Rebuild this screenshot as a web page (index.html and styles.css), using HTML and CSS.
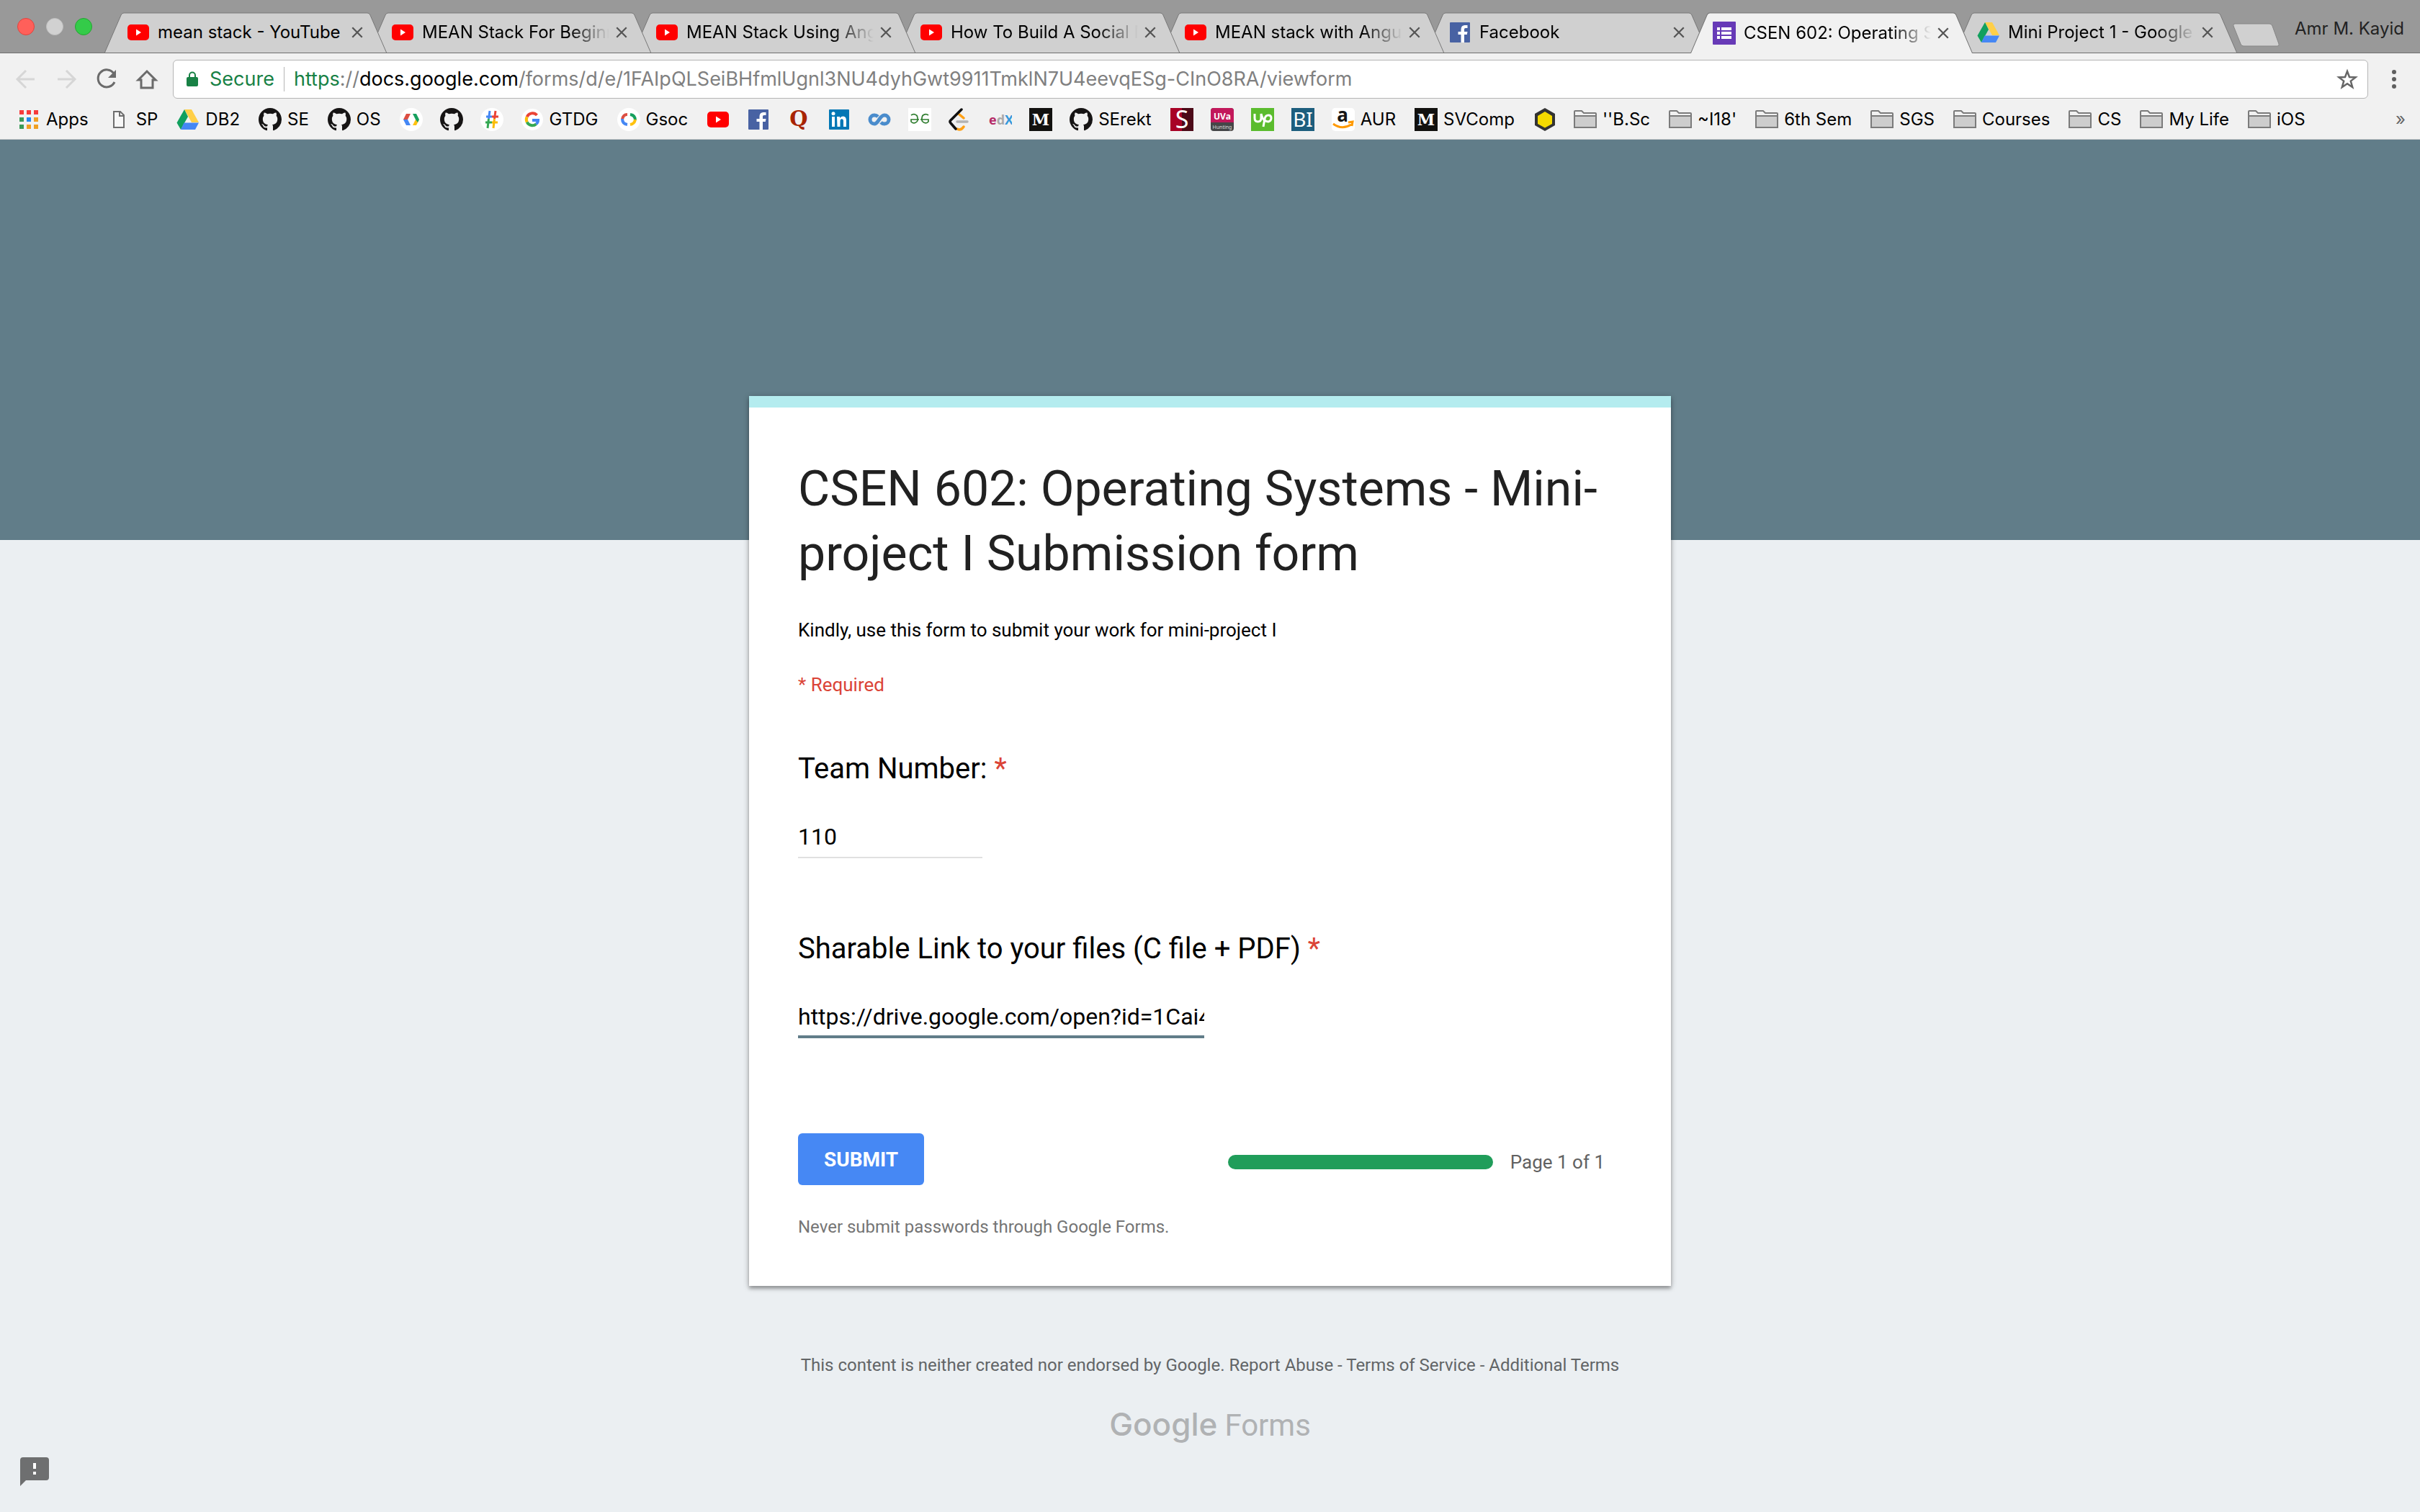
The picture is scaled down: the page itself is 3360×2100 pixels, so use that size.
FILE: index.html
```html
<!DOCTYPE html>
<html lang="en">
<head>
<meta charset="utf-8">
<title>CSEN 602: Operating Systems - Mini-project I Submission form</title>
<link rel="stylesheet" href="styles.css">
</head>
<body>
<svg class="sprite" aria-hidden="true">
  <symbol id="tab-shape" viewBox="0 0 392 56" preserveAspectRatio="none"><path d="M0 57 L23 4 Q24 1 27 1 H365 Q368 1 369 4 L392 57"/></symbol>
  <symbol id="youtube" viewBox="0 0 32 32"><rect x="1" y="5" width="30" height="22" rx="5" fill="#f00"/><path d="M13 11.500v9l7-4.500z" fill="#fff"/></symbol>
  <symbol id="facebook" viewBox="0 0 32 32"><rect x="2" y="2" width="28" height="28" rx="1" fill="#4862a3"/><path d="M17.500 30V19h-4v-4h4v-3c0-4 2-6 6-6h3v4h-2.500c-1.500 0-2 .7-2 2v3h4.500l-.7 4H22v11z" fill="#fff"/></symbol>
  <symbol id="drive" viewBox="0 0 32 32"><path d="M11 2h10l10 18H21z" fill="#ffcf48"/><path d="M11 2L.5 20.500 6 30 16 12z" fill="#11a05e"/><path d="M10.500 20.500H31L26 30H6z" fill="#4587f4"/></symbol>
  <symbol id="forms" viewBox="0 0 32 32"><rect width="32" height="32" rx="1" fill="#673ab7"/><path d="M6 8h4v4H6zM12 8h14v4H12zM6 14h4v4H6zM12 14h14v4H12zM6 20h4v4H6zM12 20h14v4H12z" fill="#fff"/></symbol>
  <symbol id="close" viewBox="0 0 16 16"><path d="M2 2l12 12M14 2L2 14" stroke="#555" stroke-width="2" fill="none"/></symbol>
  <symbol id="github" viewBox="0 0 16 16"><path fill="#161414" d="M8 0C3.580 0 0 3.580 0 8c0 3.540 2.290 6.530 5.470 7.590.4.070.55-.17.55-.38 0-.19-.01-.82-.01-1.490-2.010.37-2.530-.49-2.690-.94-.09-.23-.48-.94-.82-1.130-.28-.15-.68-.52-.01-.53.63-.01 1.080.58 1.230.82.72 1.210 1.870.87 2.330.66.070-.52.28-.87.51-1.070-1.780-.2-3.640-.89-3.640-3.950 0-.87.31-1.590.82-2.150-.08-.2-.36-1.020.08-2.120 0 0 .67-.21 2.200.82.64-.18 1.320-.27 2-.27s1.360.09 2 .27c1.530-1.040 2.200-.82 2.200-.82.44 1.100.16 1.920.08 2.120.51.56.82 1.270.82 2.150 0 3.070-1.870 3.750-3.650 3.950.29.25.54.73.54 1.480 0 1.070-.01 1.930-.01 2.200 0 .21.15.46.55.38A8.010 8.010 0 0 0 16 8c0-4.420-3.580-8-8-8z"/></symbol>
  <symbol id="devs" viewBox="0 0 32 32"><circle cx="16" cy="16" r="16" fill="#fff"/><path d="M9 8h6l-4 8H5z" fill="#dd4f43"/><path d="M5 16h6l4 8H9z" fill="#4587f4"/><path d="M22 16h5l-4 8h-5z" fill="#ffc20e"/><path d="M18 8h5l4 8-2 4-3-4z" fill="#17a05e"/></symbol>
  <symbol id="gsoc" viewBox="0 0 32 32"><circle cx="16" cy="16" r="16" fill="#fff"/><g fill="none" stroke-width="4"><path d="M14 9q-6 0-7 7" stroke="#dd4f43"/><path d="M7 15q0 7 7 8" stroke="#4587f4"/><path d="M18 9q7 1 7 8" stroke="#17a05e"/><path d="M25 16q-1 6-7 7" stroke="#ffc20e"/></g></symbol>
  <symbol id="hash" viewBox="0 0 32 32"><circle cx="16" cy="16" r="16" fill="#fff"/><g fill="none" stroke-width="3"><path d="M13 4l-1.500 11M8 12h8" stroke="#4587f4"/><path d="M21 4l-1.500 11M16 12h9" stroke="#ea4335"/><path d="M11.500 15L10 28M7 20h9" stroke="#34a853"/><path d="M19.500 15L18 28M16 20h8" stroke="#fbbc05"/></g></symbol>
  <symbol id="google" viewBox="0 0 32 32"><circle cx="16" cy="16" r="15" fill="#fff"/><g fill="none" stroke-width="4"><path d="M22.500 10A8.300 8.300 0 0 0 8.700 12.300" stroke="#ea4335"/><path d="M8.700 12.300a8.300 8.300 0 0 0 0 7.400" stroke="#fbbc05"/><path d="M8.700 19.700a8.300 8.300 0 0 0 12.800 2.500" stroke="#34a853"/><path d="M21.500 22.200q2.500-2 2.500-5.200H16" stroke="#4285f4"/></g></symbol>
  <symbol id="linkedin" viewBox="0 0 32 32"><rect x="2" y="2" width="28" height="28" rx="1" fill="#0177b5"/><path d="M6 12h4v14H6zM13 12h4v2q1.500-2.500 4.500-2.500 4.500 0 4.500 6V26h-4v-7.500q0-3.300-2.300-3.300-2.200 0-2.200 3.300V26h-4z" fill="#fff"/><circle cx="8" cy="7.800" r="2.500" fill="#fff"/></symbol>
  <symbol id="coursera" viewBox="0 0 32 32"><path d="M14 12q-2-2-5-2a6 6 0 0 0 0 12c6 0 7-12 14-12a6 6 0 0 1 0 12q-3 0-5-2" fill="none" stroke="#4a8ccc" stroke-width="5"/></symbol>
  <symbol id="geeks" viewBox="0 0 32 32"><path d="M0 0h32v32H0z" fill="#fff"/><path d="M4 10Q8 7 12 10.500q2 4 .5 8Q8 23 4 19v-3h11M28 10q-4-3-8 .5-2 4-.5 8Q24 23 28 19v-3H17" fill="none" stroke="#2f7d2f" stroke-width="1.700"/></symbol>
  <symbol id="leetcode" viewBox="0 0 32 32"><g fill="none" stroke-width="3.500" stroke-linecap="round"><path d="M15 9l6 5M12 29q5 3 9-3" stroke="#ffa116"/><path d="M12 19h14" stroke="#b3b3b3"/><path d="M18 2L3 17q-2 2 0 4l7 8" stroke="#111"/></g></symbol>
  <symbol id="upwork" viewBox="0 0 32 32"><path d="M0 0h32v32H0z" fill="#5bbc2e"/><path d="M5 8v6q0 5 4.500 5t4.500-5V8q2 8 6 11M17 26l2-11q1-5 5-5t4 4-4 5q-3 0-6-3" fill="none" stroke="#fff" stroke-width="3"/></symbol>
  <symbol id="hexagon" viewBox="0 0 32 32"><path d="M16 0l14 8v16l-14 8-14-8V8z" fill="#333"/><path d="M16 5l10 6v11l-10 5.500L6 22V11z" fill="#f5da00"/></symbol>
  <symbol id="folder" viewBox="0 0 32 32"><path d="M1 27V5q0-1 1-1h9l3 3h16q1 0 1 1v19z" fill="#f1f1f1" stroke="#7b7b7b" stroke-width="2"/><path d="M2 12h28v14H2z" fill="#cdcdcd"/><path d="M1 11h30" stroke="#7b7b7b" stroke-width="2"/></symbol>
  <symbol id="page" viewBox="0 0 32 32"><path d="M9 5h9l5 5v17H9zM17 5v6h6" fill="#f7f7f7" stroke="#6e6e6e" stroke-width="2"/></symbol>
  <symbol id="apps" viewBox="0 0 32 32"><path d="M3 3h6v6H3zM13 3h6v6h-6zM23 3h6v6h-6z" fill="#f63b3b"/><path d="M3 13h6v6H3zM3 23h6v6H3z" fill="#3a9b58"/><path d="M13 13h6v6h-6z" fill="#1e88f0"/><path d="M23 13h6v6h-6zM13 23h6v6h-6zM23 23h6v6h-6z" fill="#f0a023"/></symbol>
</svg>

<div class="titlebar">
  <div class="lights"><span class="light red"></span><span class="light gray"></span><span class="light green"></span></div>
  <nav class="tabs">
    <div class="tab t1"><svg class="shape"><use href="#tab-shape"/></svg><svg class="icon"><use href="#youtube"/></svg><span class="tab-title">mean stack - YouTube</span><button class="close" aria-label="Close tab"><svg><use href="#close"/></svg></button></div>
    <div class="tab t2"><svg class="shape"><use href="#tab-shape"/></svg><svg class="icon"><use href="#youtube"/></svg><span class="tab-title">MEAN Stack For Beginners</span><button class="close" aria-label="Close tab"><svg><use href="#close"/></svg></button></div>
    <div class="tab t3"><svg class="shape"><use href="#tab-shape"/></svg><svg class="icon"><use href="#youtube"/></svg><span class="tab-title">MEAN Stack Using Angular</span><button class="close" aria-label="Close tab"><svg><use href="#close"/></svg></button></div>
    <div class="tab t4"><svg class="shape"><use href="#tab-shape"/></svg><svg class="icon"><use href="#youtube"/></svg><span class="tab-title">How To Build A Social Network</span><button class="close" aria-label="Close tab"><svg><use href="#close"/></svg></button></div>
    <div class="tab t5"><svg class="shape"><use href="#tab-shape"/></svg><svg class="icon"><use href="#youtube"/></svg><span class="tab-title">MEAN stack with Angular</span><button class="close" aria-label="Close tab"><svg><use href="#close"/></svg></button></div>
    <div class="tab t6"><svg class="shape"><use href="#tab-shape"/></svg><svg class="icon"><use href="#facebook"/></svg><span class="tab-title">Facebook</span><button class="close" aria-label="Close tab"><svg><use href="#close"/></svg></button></div>
    <div class="tab active"><svg class="shape"><use href="#tab-shape"/></svg><svg class="icon"><use href="#forms"/></svg><span class="tab-title">CSEN 602: Operating Systems</span><button class="close" aria-label="Close tab"><svg><use href="#close"/></svg></button></div>
    <div class="tab"><svg class="shape"><use href="#tab-shape"/></svg><svg class="icon"><use href="#drive"/></svg><span class="tab-title">Mini Project 1 - Google Drive</span><button class="close" aria-label="Close tab"><svg><use href="#close"/></svg></button></div>
  </nav>
  <button class="new-tab" aria-label="New tab"><svg viewBox="0 0 68 34"><path d="M4 1h48q3 0 4 3l9 25q1 3-2 3H16q-3 0-4-3L2 4q-1-3 2-3z" fill="#d0d0d0" stroke="#858585" stroke-width="1"/></svg></button>
  <span class="profile">Amr M. Kayid</span>
</div>

<div class="toolbar">
  <div class="nav-buttons">
    <button class="tool" aria-label="Back"><svg viewBox="0 0 32 32"><path d="M28 16H4M16 4L4 16l12 12" fill="none" stroke="#d6d6d6" stroke-width="3"/></svg></button>
    <button class="tool" aria-label="Forward"><svg viewBox="0 0 32 32"><path d="M4 16h24M16 4l12 12-12 12" fill="none" stroke="#d6d6d6" stroke-width="3"/></svg></button>
    <button class="tool" aria-label="Reload"><svg viewBox="0 0 32 32"><path d="M26 8A12 12 0 1 0 27 20" fill="none" stroke="#6b6b6b" stroke-width="3"/><path d="M29 3v11H18z" fill="#6b6b6b"/></svg></button>
    <button class="tool" aria-label="Home"><svg viewBox="0 0 32 32"><path d="M4 17L16 5l12 12h-4v11H8V17z" fill="none" stroke="#6b6b6b" stroke-width="3"/></svg></button>
  </div>
  <div class="omnibox">
    <svg class="lock" viewBox="0 0 16 22"><rect y="8" width="16" height="13" rx="2" fill="#188145"/><path d="M4 9V5.500a4 4 0 0 1 8 0V9" fill="none" stroke="#188145" stroke-width="2"/></svg>
    <span class="secure">Secure</span>
    <div class="url" role="textbox" aria-label="Address" contenteditable="true" spellcheck="false"><span class="scheme">https</span>://<span class="host">docs.google.com</span>/forms/d/e/1FAIpQLSeiBHfmlUgnl3NU4dyhGwt9911TmklN7U4eevqESg-CInO8RA/viewform</div>
    <button class="tool" aria-label="Bookmark this page"><svg viewBox="0 0 32 32"><path d="M16 5l3 8 8.500.4-6.700 5.200 2.400 8.400-7.200-4.800-7.200 4.800 2.400-8.400L4.500 13.400 13 13z" fill="none" stroke="#666" stroke-width="2.500"/></svg></button>
  </div>
  <button class="tool" aria-label="Menu"><svg viewBox="0 0 32 32"><g fill="#5f5f5f"><circle cx="16" cy="6" r="3"/><circle cx="16" cy="16" r="3"/><circle cx="16" cy="26" r="3"/></g></svg></button>
</div>

<nav class="bookmarks">
  <a href="#"><svg><use href="#apps"/></svg><span>Apps</span></a>
  <a href="#"><svg><use href="#page"/></svg><span>SP</span></a>
  <a href="#"><svg><use href="#drive"/></svg><span>DB2</span></a>
  <a href="#"><svg><use href="#github"/></svg><span>SE</span></a>
  <a href="#"><svg><use href="#github"/></svg><span>OS</span></a>
  <a href="#" aria-label="Developers"><svg><use href="#devs"/></svg></a>
  <a href="#" aria-label="GitHub"><svg><use href="#github"/></svg></a>
  <a href="#" aria-label="Hash Code"><svg><use href="#hash"/></svg></a>
  <a href="#"><svg><use href="#google"/></svg><span>GTDG</span></a>
  <a href="#"><svg><use href="#gsoc"/></svg><span>Gsoc</span></a>
  <a href="#" aria-label="YouTube"><svg><use href="#youtube"/></svg></a>
  <a href="#" aria-label="Facebook"><svg><use href="#facebook"/></svg></a>
  <a href="#" aria-label="Quora"><svg viewBox="0 0 32 32"><text x="16" y="25" text-anchor="middle" class="glyph-serif" font-size="29" fill="#a82400">Q</text></svg></a>
  <a href="#" aria-label="LinkedIn"><svg><use href="#linkedin"/></svg></a>
  <a href="#" aria-label="Coursera"><svg><use href="#coursera"/></svg></a>
  <a href="#" aria-label="GeeksforGeeks"><svg><use href="#geeks"/></svg></a>
  <a href="#" aria-label="LeetCode"><svg><use href="#leetcode"/></svg></a>
  <a href="#" aria-label="edX"><svg viewBox="0 0 32 32"><text x="0" y="23" class="glyph-sans" font-size="18"><tspan fill="#b52a67">e</tspan><tspan fill="#aaa">d</tspan><tspan fill="#3498db">X</tspan></text></svg></a>
  <a href="#" aria-label="Medium"><svg viewBox="0 0 32 32"><path d="M0 0h32v32H0z" fill="#12110f"/><text x="16" y="24" text-anchor="middle" class="glyph-serif" font-size="22" fill="#fff">M</text></svg></a>
  <a href="#"><svg><use href="#github"/></svg><span>SErekt</span></a>
  <a href="#" aria-label="S"><svg viewBox="0 0 32 32"><path d="M0 0h16v32H0z" fill="#a80226"/><path d="M16 0h16v32H16z" fill="#4c0a18"/><text x="16" y="28" text-anchor="middle" class="glyph-plain" font-size="34" fill="#fff">S</text></svg></a>
  <a href="#" aria-label="UVa Hunting"><svg viewBox="0 0 32 32"><rect width="32" height="32" rx="4" fill="#454648"/><path d="M0 20V4q0-4 4-4h24q4 0 4 4v16z" fill="#c2185b"/><text x="16" y="16" text-anchor="middle" class="glyph-sans" font-size="12" fill="#fff">UVa</text><text x="16" y="29" text-anchor="middle" class="glyph-plain" font-size="7" fill="#ddd">Hunting</text></svg></a>
  <a href="#" aria-label="Upwork"><svg><use href="#upwork"/></svg></a>
  <a href="#" aria-label="BI"><svg viewBox="0 0 32 32"><path d="M0 0h32v32H0z" fill="#1d5e7e"/><text x="16" y="26" text-anchor="middle" class="glyph-plain" font-size="28" fill="#fff">BI</text></svg></a>
  <a href="#"><svg viewBox="0 0 32 32"><rect width="32" height="32" rx="5" fill="#fff"/><text x="15" y="19" text-anchor="middle" class="glyph-sans" font-size="26" fill="#161616">a</text><path d="M2 22q12 9 25 1M23 20l6-1-1 6" fill="none" stroke="#f90" stroke-width="3"/></svg><span>AUR</span></a>
  <a href="#"><svg viewBox="0 0 32 32"><path d="M0 0h32v32H0z" fill="#12110f"/><text x="16" y="24" text-anchor="middle" class="glyph-serif" font-size="22" fill="#fff">M</text></svg><span>SVComp</span></a>
  <a href="#" aria-label="Hexagon"><svg><use href="#hexagon"/></svg></a>
  <a href="#"><svg><use href="#folder"/></svg><span>''B.Sc</span></a>
  <a href="#"><svg><use href="#folder"/></svg><span>~I18'</span></a>
  <a href="#"><svg><use href="#folder"/></svg><span>6th Sem</span></a>
  <a href="#"><svg><use href="#folder"/></svg><span>SGS</span></a>
  <a href="#"><svg><use href="#folder"/></svg><span>Courses</span></a>
  <a href="#"><svg><use href="#folder"/></svg><span>CS</span></a>
  <a href="#"><svg><use href="#folder"/></svg><span>My Life</span></a>
  <a href="#"><svg><use href="#folder"/></svg><span>iOS</span></a>
  <button class="more" aria-label="More bookmarks">»</button>
</nav>

<main class="page">
  <form class="card">
    <h1>CSEN 602: Operating Systems - Mini-project I Submission form</h1>
    <p class="description">Kindly, use this form to submit your work for mini-project I</p>
    <p class="required">* Required</p>
    <div class="question">
      <label for="team">Team Number: <span class="star">*</span></label>
      <input id="team" class="answer short" type="text" value="110">
    </div>
    <div class="question">
      <label for="link">Sharable Link to your files (C file + PDF) <span class="star">*</span></label>
      <input id="link" class="answer focused" type="text" value="https://drive.google.com/open?id=1Cai4">
    </div>
    <div class="actions">
      <button class="submit" type="button">SUBMIT</button>
      <div class="progress"><div class="bar"></div><span>Page 1 of 1</span></div>
    </div>
    <p class="warning">Never submit passwords through Google Forms.</p>
  </form>
  <footer>
    <p class="legal">This content is neither created nor endorsed by Google. <a href="#">Report Abuse</a> - <a href="#">Terms of Service</a> - <a href="#">Additional Terms</a></p>
    <a class="logo" href="#"><span class="logo-google">Google</span> <span class="logo-forms">Forms</span></a>
  </footer>
  <button class="feedback" aria-label="Report a problem"><svg viewBox="0 0 40 40"><path d="M4 0h32q4 0 4 4v24q0 4-4 4H8l-8 8V4q0-4 4-4z" fill="#6e6f70"/><path d="M18 8h4v8h-4zM18 20h4v4h-4z" fill="#fff"/></svg></button>
</main>
</body>
</html>
```
FILE: styles.css
```css
* { box-sizing: border-box; }
body { margin: 0; min-height: 100vh; display: flex; flex-direction: column; font-family: Roboto, sans-serif; color: #000; background: #ebeff2; }
button { border: 0; padding: 0; background: none; font: inherit; }
a { color: inherit; text-decoration: none; }
h1, p { margin: 0; }
svg { display: block; }
.sprite { position: absolute; width: 0; height: 0; }
.glyph-serif { font-family: "DejaVu Serif", serif; font-weight: 700; }
.glyph-sans { font-family: "Open Sans", sans-serif; font-weight: 700; }
.glyph-plain { font-family: "Noto Sans", sans-serif; }

/* Window title bar and tabs */
.titlebar { display: flex; align-items: flex-end; height: 74px; padding-right: 22px; background: #999; border-bottom: 1px solid #6f6f6f; font: 24px/30px Inter, sans-serif; }
.lights { display: flex; gap: 16px; align-self: center; flex: none; width: 145px; padding-left: 24px; }
.light { width: 24px; height: 24px; border-radius: 50%; border: 1px solid; }
.red { background: #ff605a; border-color: #e0443e; }
.gray { background: #d1d1d1; border-color: #c0c0c0; }
.green { background: #34cb49; border-color: #24a532; }
.tabs { display: flex; flex: 0 1 2961px; min-width: 0; }
.tab { position: relative; display: flex; align-items: center; flex: 1 1 0; min-width: 0; height: 56px; margin-right: -25px; padding: 0 32px 0 31px; fill: #d0d0d0; }
.tab:last-child { margin-right: 0; }
.t1 { z-index: 6; } .t2 { z-index: 5; } .t3 { z-index: 4; } .t4 { z-index: 3; } .t5 { z-index: 2; } .t6 { z-index: 1; }
.active { z-index: 7; fill: #f1f1f1; height: 57px; margin-bottom: -1px; }
.shape { position: absolute; inset: 0; width: 100%; height: 100%; stroke: #777; stroke-width: 1; }
.tab > .icon { position: relative; flex: none; width: 32px; height: 32px; }
.tab-title { position: relative; flex: 1; min-width: 0; margin: 0 8px 0 11px; overflow: hidden; white-space: nowrap; -webkit-mask-image: linear-gradient(to left, transparent, #000 56px); mask-image: linear-gradient(to left, transparent, #000 56px); }
.t1 .tab-title { -webkit-mask-image: none; mask-image: none; }
.close { position: relative; flex: none; }
.close svg { width: 18px; height: 18px; }
.new-tab { margin: 0 0 7px -7px; flex: none; }
.new-tab svg { width: 68px; height: 34px; }
.profile { margin: 0 0 18px auto; white-space: nowrap; color: #222; }

/* Toolbar */
.toolbar { display: flex; align-items: center; gap: 20px; height: 72px; padding: 0 20px; background: #f1f1f1; }
.nav-buttons { display: flex; gap: 24px; }
.tool { flex: none; }
.tool svg { width: 32px; height: 32px; }
.omnibox { display: flex; flex: 1; align-items: center; min-width: 0; height: 54px; padding: 0 12px 0 18px; background: #fff; border: 1px solid #b5b5b5; border-radius: 6px; font: 27px/34px Inter, sans-serif; }
.lock { width: 16px; height: 22px; }
.secure { margin-left: 16px; padding-right: 13px; color: #188145; border-right: 1px solid #b5b5b5; }
.url { flex: 1; min-width: 0; margin-left: 13px; overflow: hidden; white-space: nowrap; color: #808080; outline: 0; }
.scheme { color: #188145; }
.host { color: #000; }

/* Bookmarks */
.bookmarks { display: flex; align-items: center; gap: 24px; height: 48px; padding: 0 20px 8px 24px; background: #f1f1f1; border-bottom: 1px solid #c8cacb; font: 24px/30px Inter, sans-serif; }
.bookmarks a { display: flex; align-items: center; gap: 8px; flex: none; white-space: nowrap; }
.bookmarks svg { width: 32px; height: 32px; }
.bookmarks span { padding-right: 2px; }
.more { margin-left: auto; color: #666; }

/* Form page */
.page { position: relative; flex: 1; padding-top: 356px; background: linear-gradient(#617d89 556px, #ebeff2 556px); }
.card { width: 1280px; max-width: 100%; margin: 0 auto; padding: 68px 68px 66px; border-top: 16px solid #b4ecef; background: #fff; box-shadow: 0 4px 4px rgba(0, 0, 0, .2), 0 2px 8px rgba(0, 0, 0, .3); }
h1 { font-size: 68px; line-height: 90px; font-weight: 400; color: #212121; }
.description, .required { font-size: 26px; line-height: 36px; }
.description { margin-top: 43px; }
.required { margin-top: 40px; color: #db4437; }
.question { display: flex; flex-direction: column; height: 178px; margin-top: 72px; }
.question label { font-size: 40px; line-height: 54px; }
.star { color: #db4437; }
.answer { width: 564px; height: 54px; margin-top: 43px; padding: 0 0 4px; border: 0; border-bottom: 2px solid #e0e0e0; outline: 0; font: 32px/48px Roboto, sans-serif; color: #000; background: none; }
.short { width: 256px; }
.focused { border-bottom: 4px solid #617d89; padding-bottom: 2px; }
.actions { display: flex; align-items: center; justify-content: space-between; margin-top: 105px; }
.submit { height: 72px; padding: 0 36px; border-radius: 6px; background: #4688f4; color: #fff; font-size: 28px; font-weight: 700; }
.progress { display: flex; align-items: center; gap: 24px; padding: 8px 24px 0 0; font-size: 26px; line-height: 36px; color: #616161; }
.bar { width: 368px; height: 20px; border-radius: 10px; background: #209d5a; }
.warning { margin-top: 42px; font-size: 24px; line-height: 32px; color: #757575; }
footer { display: flex; flex-direction: column; align-items: center; margin-top: 94px; }
.legal { font-size: 24px; line-height: 32px; color: #626567; }
.logo { display: flex; align-items: baseline; gap: 10px; margin-top: 36px; line-height: 60px; color: #b0b2b4; }
.logo-google { font: 500 44px/60px Inter, sans-serif; }
.logo-forms { font-size: 42px; }
.feedback { position: absolute; left: 28px; bottom: 36px; }
.feedback svg { width: 40px; height: 40px; }
```
